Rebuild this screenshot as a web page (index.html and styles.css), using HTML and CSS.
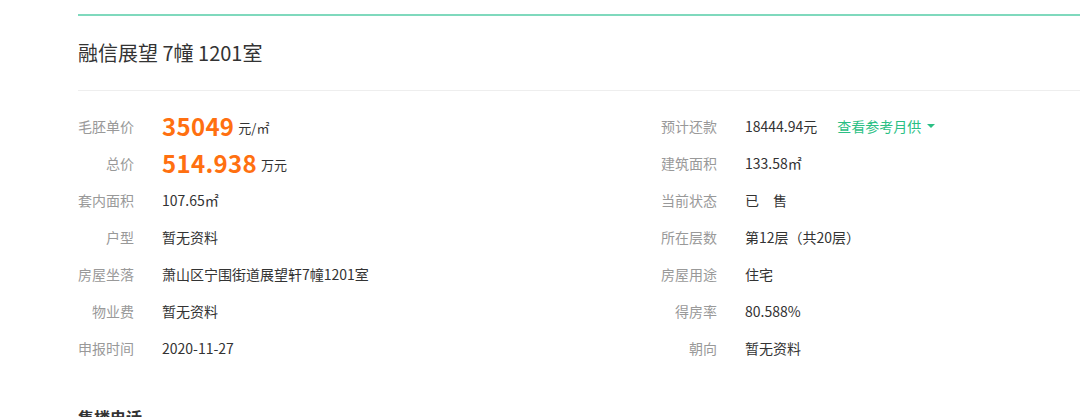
FILE: index.html
```html
<!DOCTYPE html>
<html lang="zh-CN">
<head>
<meta charset="utf-8">
<title>融信展望 7幢 1201室</title>
<link rel="stylesheet" href="styles.css">
</head>
<body>
<div class="wrap">
  <div class="topline"></div>
  <h1 class="title">融信展望 7幢 1201室</h1>
  <div class="info">
    <div class="col">
      <div class="row"><span class="lbl">毛胚单价</span><span class="val"><b class="big">35049</b><span class="unit">元/㎡</span></span></div>
      <div class="row"><span class="lbl">总价</span><span class="val"><b class="big">514.938</b><span class="unit">万元</span></span></div>
      <div class="row"><span class="lbl">套内面积</span><span class="val">107.65㎡</span></div>
      <div class="row"><span class="lbl">户型</span><span class="val">暂无资料</span></div>
      <div class="row"><span class="lbl">房屋坐落</span><span class="val">萧山区宁围街道展望轩7幢1201室</span></div>
      <div class="row"><span class="lbl">物业费</span><span class="val">暂无资料</span></div>
      <div class="row"><span class="lbl">申报时间</span><span class="val">2020-11-27</span></div>
    </div>
    <div class="col">
      <div class="row"><span class="lbl">预计还款</span><span class="val">18444.94元<a class="link" href="#">查看参考月供<i class="caret"></i></a></span></div>
      <div class="row"><span class="lbl">建筑面积</span><span class="val">133.58㎡</span></div>
      <div class="row"><span class="lbl">当前状态</span><span class="val">已&emsp;售</span></div>
      <div class="row"><span class="lbl">所在层数</span><span class="val">第12层（共20层）</span></div>
      <div class="row"><span class="lbl">房屋用途</span><span class="val">住宅</span></div>
      <div class="row"><span class="lbl">得房率</span><span class="val">80.588%</span></div>
      <div class="row"><span class="lbl">朝向</span><span class="val">暂无资料</span></div>
    </div>
  </div>
  <h2 class="sub">售楼电话</h2>
</div>
</body>
</html>
```
FILE: styles.css
```css
html, body {
  margin: 0;
  padding: 0;
  background: #fff;
}
body {
  font-family: "Microsoft YaHei", "Noto Sans CJK SC", "Noto Sans", sans-serif;
  color: #333;
  overflow: hidden;
}
.wrap {
  padding-left: 78px;
}
.topline {
  margin-top: 14px;
  height: 2px;
  background: #7fd9bd;
}
.title {
  margin: 0;
  font-size: 20px;
  font-weight: normal;
  line-height: 74px;
  color: #333;
  border-bottom: 1px solid #eeeeee;
}
.info {
  display: grid;
  grid-template-columns: 583px 1fr;
  padding-top: 16px;
}
.row {
  display: flex;
  align-items: center;
  height: 37px;
  font-size: 14px;
}
.lbl {
  width: 56px;
  text-align: right;
  color: #999;
  flex: none;
  white-space: nowrap;
}
.val {
  margin-left: 28px;
  color: #333;
  display: flex;
  align-items: center;
  white-space: nowrap;
}
.big {
  font-size: 24px;
  font-weight: bold;
  color: #ff7010;
  letter-spacing: 0.3px;
}
.unit {
  margin-left: 4px;
  margin-top: 4px;
  font-size: 13px;
  color: #333;
}
.link {
  margin-left: 20px;
  color: #2bbf84;
  text-decoration: none;
  display: flex;
  align-items: center;
}
.caret {
  display: inline-block;
  margin-left: 6px;
  width: 0;
  height: 0;
  border-left: 4px solid transparent;
  border-right: 4px solid transparent;
  border-top: 4px solid #2bbf84;
}
.sub {
  margin: 40px 0 0;
  font-size: 16px;
  font-weight: bold;
  line-height: 22px;
  color: #333;
}
```
